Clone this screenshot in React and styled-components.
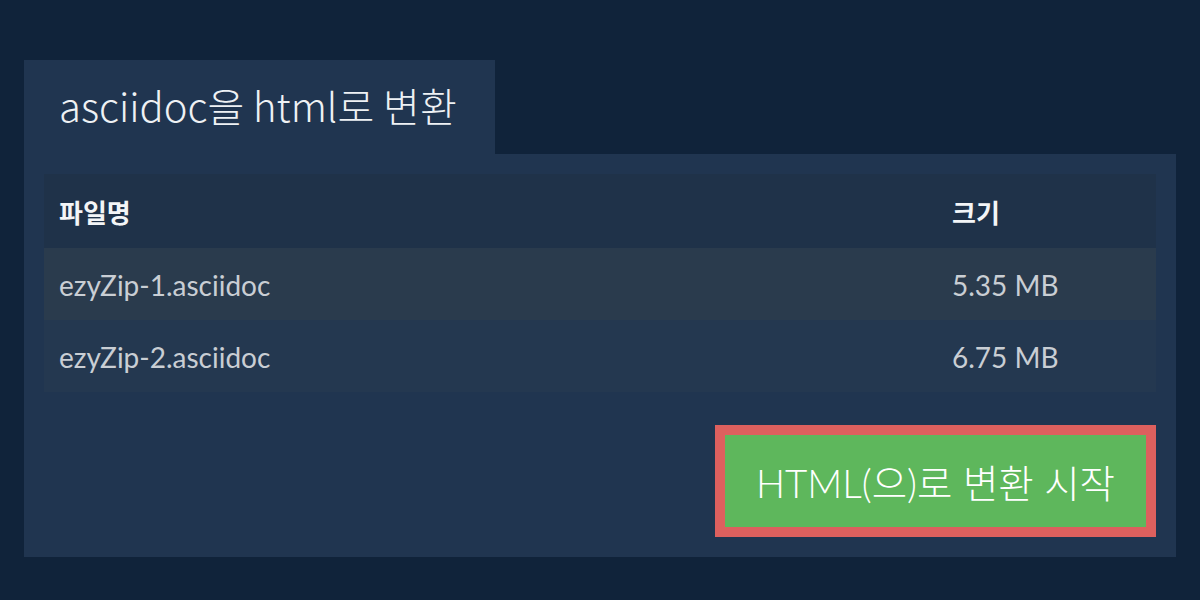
import React from 'react'
import styled, { createGlobalStyle } from 'styled-components'

const GlobalStyle = createGlobalStyle`
  html, body {
    margin: 0;
    padding: 0;
    background: #10233a;
  }
  body {
    font-family: Lato, "Noto Sans CJK KR", sans-serif;
  }
`

const Page = styled.div`
  width: 1200px;
  height: 600px;
  box-sizing: border-box;
  padding: 60px 24px 0;
  background: #10233a;
`

const Tab = styled.div`
  width: 471px;
  height: 94px;
  box-sizing: border-box;
  padding: 0 0 4px 35px;
  display: flex;
  align-items: center;
  background: #203550;
  color: #eef1f4;
  font-family: "Noto Sans CJK KR", sans-serif;
  font-weight: 300;
  font-size: 40px;
`

const Panel = styled.div`
  background: #203550;
  height: 403px;
  box-sizing: border-box;
  padding: 20px 20px 0;
  display: flex;
  flex-direction: column;
`

const Table = styled.div`
  display: flex;
  flex-direction: column;
`

const Row = styled.div`
  display: grid;
  grid-template-columns: 893px 1fr;
  height: ${(p) => p.$h}px;
  align-items: center;
  background: ${(p) => p.$bg};
`

const HeadCell = styled.div`
  padding-left: 15px;
  font-family: "Noto Sans CJK KR", sans-serif;
  font-weight: 700;
  font-size: 26px;
  color: #f3f5f7;
`

const Cell = styled.div`
  padding-left: 15px;
  font-family: Lato, "Noto Sans CJK KR", sans-serif;
  font-size: 28px;
  color: #c9ced4;
  padding-top: 2px;
`

const Actions = styled.div`
  display: flex;
  justify-content: flex-end;
  margin-top: 33px;
`

const StartButton = styled.button`
  width: 441px;
  height: 112px;
  box-sizing: border-box;
  border: 10px solid #dd605e;
  background: #5eb75c;
  color: #ffffff;
  font-family: Lato, "Noto Sans CJK KR", sans-serif;
  font-weight: 300;
  font-size: 38.5px;
  padding: 0;
  cursor: pointer;
`

const files = [
  { name: 'ezyZip-1.asciidoc', size: '5.35 MB', bg: '#2a3b4d' },
  { name: 'ezyZip-2.asciidoc', size: '6.75 MB', bg: '#243850' },
]

function App() {
  return (
    <Page>
      <GlobalStyle />
      <Tab>asciidoc을 html로 변환</Tab>
      <Panel>
        <Table>
          <Row $h={74} $bg="#1f3249">
            <HeadCell>파일명</HeadCell>
            <HeadCell>크기</HeadCell>
          </Row>
          {files.map((f) => (
            <Row key={f.name} $h={72} $bg={f.bg}>
              <Cell>{f.name}</Cell>
              <Cell>{f.size}</Cell>
            </Row>
          ))}
        </Table>
        <Actions>
          <StartButton>HTML(으)로 변환 시작</StartButton>
        </Actions>
      </Panel>
    </Page>
  )
}

export default App
